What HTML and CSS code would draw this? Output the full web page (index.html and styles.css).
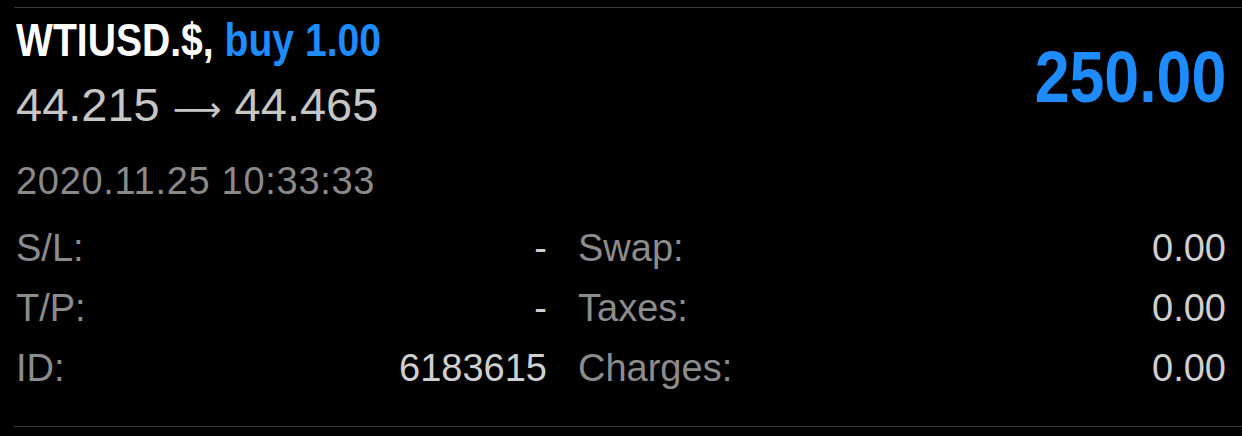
FILE: index.html
```html
<!DOCTYPE html>
<html lang="en">
<head>
    <meta charset="UTF-8">
    <meta name="viewport" content="width=device-width, initial-scale=1.0">
    <title>Trade</title>
    <link rel="stylesheet" href="styles.css">
</head>
<body>

    <div class="trade">
        <div class="trade-head">
            <div class="trade-main">
                <div class="symbol"><span class="symbol-text">WTIUSD.$, <span class="side">buy 1.00</span></span></div>
                <div class="prices">44.215 <span class="arrow">&#10230;</span> 44.465</div>
            </div>
            <div class="profit"><span class="profit-text">250.00</span></div>
        </div>

        <div class="time">2020.11.25 10:33:33</div>

        <div class="details">
            <div class="cell"><span class="label">S/L:</span><span class="value">-</span></div>
            <div class="cell"><span class="label">Swap:</span><span class="value">0.00</span></div>
            <div class="cell"><span class="label">T/P:</span><span class="value">-</span></div>
            <div class="cell"><span class="label">Taxes:</span><span class="value">0.00</span></div>
            <div class="cell"><span class="label">ID:</span><span class="value">6183615</span></div>
            <div class="cell"><span class="label">Charges:</span><span class="value">0.00</span></div>
        </div>
    </div>

</body>
</html>
```

FILE: styles.css
```css
body {
    font-family: "Liberation Sans", Arial, sans-serif;
    background-color: #000;
    color: #fff;
    margin: 0;
    padding-top: 7px;
}
.trade {
    margin-left: 14px;
    border-top: 1px solid #3a3a3a;
    border-bottom: 1px solid #3a3a3a;
    padding: 7px 16px 28px 2px;
}
.trade-head {
    display: flex;
    justify-content: space-between;
    align-items: flex-start;
}
.symbol {
    font-size: 46px;
    font-weight: bold;
    line-height: 50px;
    white-space: nowrap;
}
.symbol-text {
    display: inline-block;
    transform: scaleX(0.85);
    transform-origin: left center;
}
.side {
    color: #1e8bff;
}
.prices {
    height: 80px;
    font-size: 47px;
    line-height: 80px;
    color: #c6c6c6;
    white-space: nowrap;
}
.arrow {
    font-family: "DejaVu Sans", sans-serif;
    font-size: 34px;
    line-height: 0;
}
.profit {
    margin-top: 26px;
    font-size: 72px;
    font-weight: bold;
    line-height: 72px;
    color: #1e8bff;
}
.profit-text {
    display: inline-block;
    transform: scaleX(0.87);
    transform-origin: right center;
}
.time {
    font-size: 38px;
    letter-spacing: 0.7px;
    line-height: 73px;
    color: #8a8a8a;
}
.details {
    display: grid;
    grid-template-columns: 531px 1fr;
    column-gap: 31px;
}
.cell {
    display: flex;
    justify-content: space-between;
    font-size: 38px;
    line-height: 60px;
}
.label {
    color: #8c8c8c;
}
.value {
    color: #cfcfcf;
}
```
